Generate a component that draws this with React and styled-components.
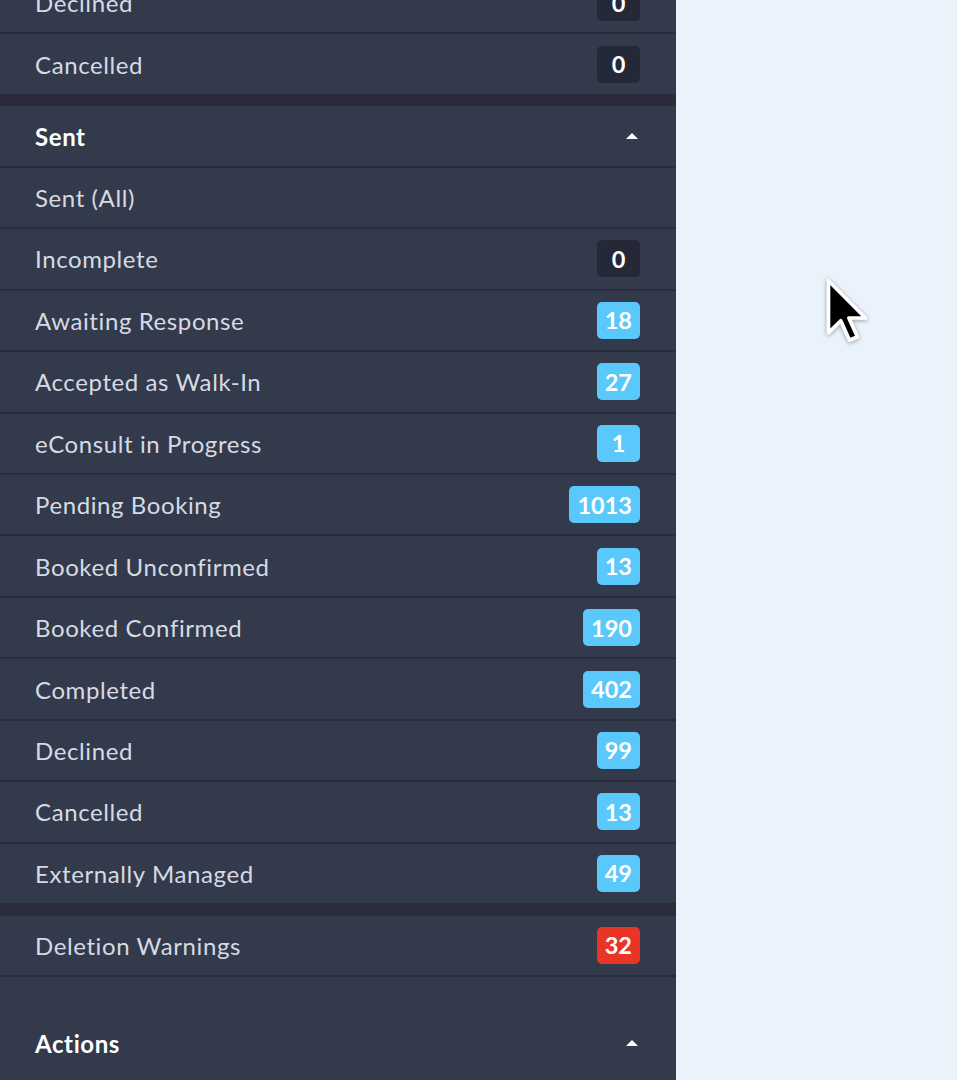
import React from "react";
import styled, { createGlobalStyle } from "styled-components";

const Global = createGlobalStyle`
  html, body { margin: 0; padding: 0; background: #eaf2fc; }
  body { font-family: Lato, "Noto Sans", sans-serif; overflow: hidden; }
  * { box-sizing: border-box; }
`;

const Page = styled.div`
  display: flex;
  height: 1080px;
  overflow: hidden;
`;

const Sidebar = styled.nav`
  width: 676px;
  flex: none;
  height: 100%;
  background: #333a4c;
  overflow: hidden;
`;

const Scroll = styled.div`
  margin-top: -27px;
  display: flex;
  flex-direction: column;
`;

const Group = styled.div`
  display: flex;
  flex-direction: column;
`;

const Divider = styled.div`
  height: 10.5px;
  background: #2a2b3b;
`;

const Gap = styled.div`
  height: 35.5px;
`;

const Row = styled.div`
  display: flex;
  align-items: center;
  justify-content: space-between;
  height: 61.45px;
  padding: 0 36px 0 35px;
  border-bottom: ${(p) => (p.$noBorder ? "none" : "2.2px solid #2a2d3b")};
  color: ${(p) => (p.$header ? "#ffffff" : "#d6dae3")};
  font-size: 24px;
  letter-spacing: 0.6px;
  font-weight: ${(p) => (p.$header ? 700 : 400)};
`;

const Label = styled.span``;

const badgeColors = {
  dark: "#252836",
  blue: "#5ac8fa",
  red: "#ea3425",
};

const Badge = styled.span`
  display: inline-flex;
  align-items: center;
  justify-content: center;
  height: 37px;
  min-width: 43px;
  padding: 0 8px;
  border-radius: 5px;
  background: ${(p) => badgeColors[p.$tone]};
  color: #ffffff;
  font-weight: 700;
  font-size: 23.5px;
  letter-spacing: 0;
`;

const Caret = styled.span`
  width: 0;
  height: 0;
  margin-right: 2px;
  border-left: 6px solid transparent;
  border-right: 6px solid transparent;
  border-bottom: 6px solid #ffffff;
`;

const Main = styled.main`
  flex: 1;
  position: relative;
`;

const Cursor = styled.svg`
  position: absolute;
  left: 149px;
  top: 277px;
  filter: drop-shadow(0 1px 2px rgba(0, 0, 0, 0.35));
`;

const Item = ({ label, count, tone = "blue", noBorder }) => (
  <Row $noBorder={noBorder}>
    <Label>{label}</Label>
    {count !== undefined && <Badge $tone={tone}>{count}</Badge>}
  </Row>
);

const Header = ({ label, noBorder }) => (
  <Row $header $noBorder={noBorder}>
    <Label>{label}</Label>
    <Caret />
  </Row>
);

const sent = [
  ["Sent (All)"],
  ["Incomplete", 0, "dark"],
  ["Awaiting Response", 18],
  ["Accepted as Walk-In", 27],
  ["eConsult in Progress", 1],
  ["Pending Booking", 1013],
  ["Booked Unconfirmed", 13],
  ["Booked Confirmed", 190],
  ["Completed", 402],
  ["Declined", 99],
  ["Cancelled", 13],
  ["Externally Managed", 49],
];

export default function App() {
  return (
    <>
      <Global />
      <Page>
        <Sidebar>
          <Scroll>
            <Group>
              <Item label="Declined" count={0} tone="dark" />
              <Item label="Cancelled" count={0} tone="dark" />
            </Group>
            <Divider />
            <Group>
              <Header label="Sent" />
              {sent.map(([label, count, tone]) => (
                <Item key={label} label={label} count={count} tone={tone} />
              ))}
            </Group>
            <Divider />
            <Group>
              <Item label="Deletion Warnings" count={32} tone="red" />
            </Group>
            <Gap />
            <Header label="Actions" noBorder />
          </Scroll>
        </Sidebar>
        <Main>
          <Cursor width="44" height="70" viewBox="0 0 19 30">
            <path
              d="M1.5 1.5 L1.5 24 L6.8 18.8 L10.6 27.2 L14 25.7 L10.3 17.6 L17.5 17.6 Z"
              fill="#000"
              stroke="#fff"
              strokeWidth="1.6"
              strokeLinejoin="round"
            />
          </Cursor>
        </Main>
      </Page>
    </>
  );
}
